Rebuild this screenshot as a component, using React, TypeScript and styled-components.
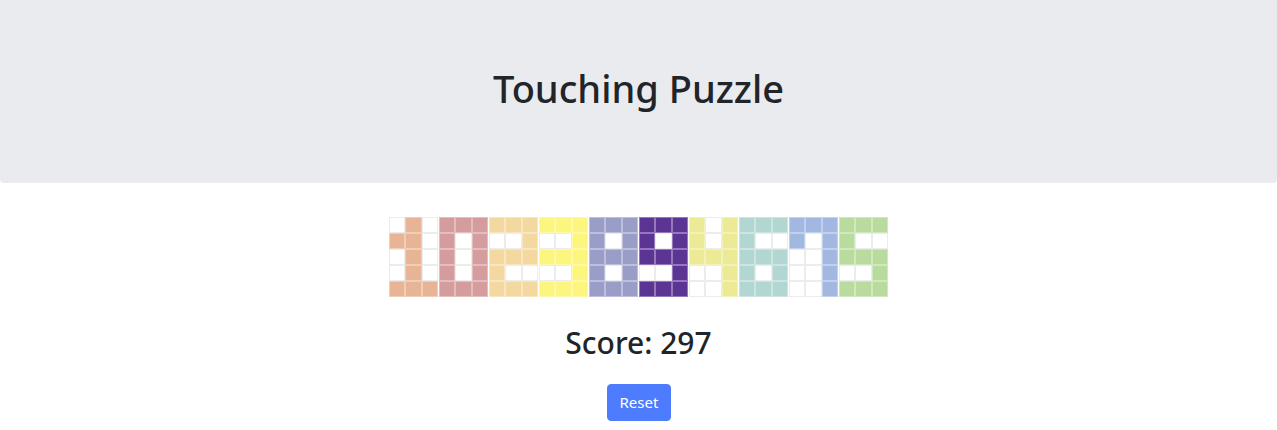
import React from "react";
import styled, { createGlobalStyle } from "styled-components";

const GlobalStyle = createGlobalStyle`
  html, body { margin: 0; padding: 0; background: #fff; }
  body { font-family: "Noto Sans", "Open Sans", "Liberation Sans", sans-serif; color: #212529; }
`;

const Page = styled.div`
  display: flex;
  flex-direction: column;
  align-items: center;
`;

const Header = styled.header`
  align-self: stretch;
  background: #e9ebef;
  border-radius: 0 0 4px 4px;
  padding: 0 32px 6px;
  height: 183px;
  box-sizing: border-box;
  display: flex;
  align-items: center;
  justify-content: center;
  margin-bottom: 34px;
`;

const Title = styled.h1`
  margin: 0;
  font-size: 38px;
  font-weight: 500;
  line-height: 1.2;
  color: #212529;
`;

const Board = styled.div`
  display: flex;
  width: 500px;
  height: 80px;
`;

const Digit = styled.div`
  flex: 1;
  display: grid;
  grid-template-columns: repeat(3, 1fr);
  grid-template-rows: repeat(5, 1fr);
`;

const Cell = styled.div<{ $color?: string }>`
  background: ${(p) => p.$color ?? "#fff"};
  box-shadow: inset 0 0 0 1px ${(p) => (p.$color ? "rgba(255,255,255,0.35)" : "#ececec")};
`;

const Score = styled.h2`
  margin: 27px 0 22px;
  font-size: 30px;
  font-weight: 500;
  line-height: 38px;
  color: #212529;
`;

const ResetButton = styled.button`
  font-family: inherit;
  font-size: 15px;
  line-height: 1.5;
  color: #fff;
  background: #4d7cfe;
  border: 1px solid #4d7cfe;
  border-radius: 4px;
  padding: 6px 12px;
  width: 64px;
  height: 37px;
  cursor: pointer;
`;

const patterns: Record<string, string[]> = {
  "1": ["010", "110", "010", "010", "111"],
  "0": ["111", "101", "101", "101", "111"],
  "2": ["111", "001", "111", "100", "111"],
  "3": ["111", "001", "111", "001", "111"],
  "8": ["111", "101", "111", "101", "111"],
  "9": ["111", "101", "111", "001", "111"],
  "4": ["101", "101", "111", "001", "001"],
  "6": ["111", "100", "111", "101", "111"],
  "7": ["111", "101", "001", "001", "001"],
  "5": ["111", "100", "111", "001", "111"],
};

const digits: { d: string; color: string }[] = [
  { d: "1", color: "#e8b496" },
  { d: "0", color: "#d49c9c" },
  { d: "2", color: "#f3d9a0" },
  { d: "3", color: "#fcf67e" },
  { d: "8", color: "#9b9dc9" },
  { d: "9", color: "#5b3494" },
  { d: "4", color: "#ecea94" },
  { d: "6", color: "#b2d6d2" },
  { d: "7", color: "#a2b8e0" },
  { d: "5", color: "#badb9e" },
];

export default function App() {
  return (
    <>
      <GlobalStyle />
      <Page>
        <Header>
          <Title>Touching Puzzle</Title>
        </Header>
        <Board>
          {digits.map((g, i) => (
            <Digit key={i}>
              {patterns[g.d].flatMap((row, r) =>
                row.split("").map((c, k) => (
                  <Cell key={`${r}-${k}`} $color={c === "1" ? g.color : undefined} />
                ))
              )}
            </Digit>
          ))}
        </Board>
        <Score>Score: 297</Score>
        <ResetButton>Reset</ResetButton>
      </Page>
    </>
  );
}
